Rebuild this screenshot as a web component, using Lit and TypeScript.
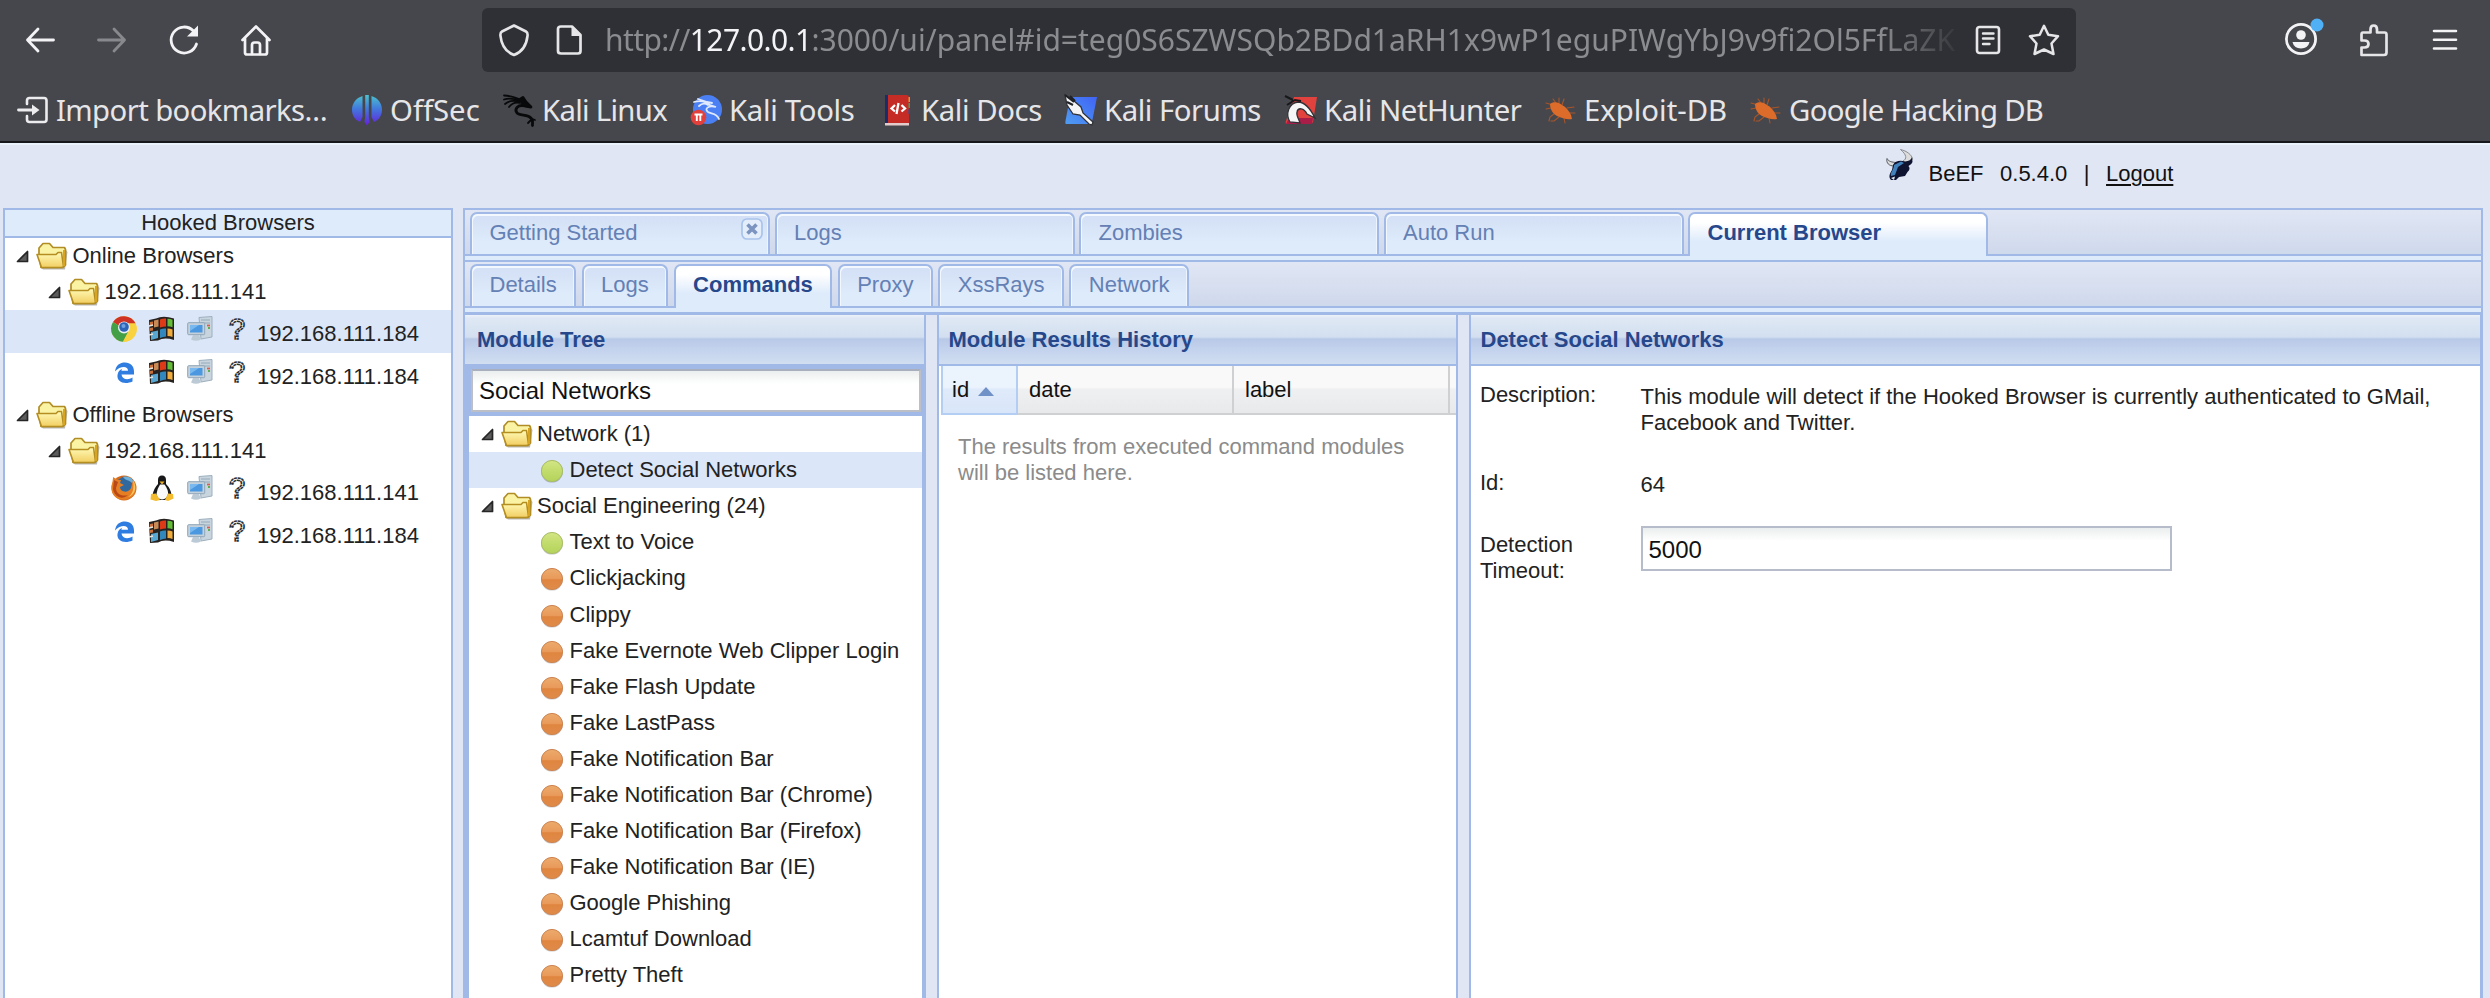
import { LitElement, html, css, svg } from "lit";
import { customElement, property } from "lit/decorators.js";
import { classMap } from "lit/directives/class-map.js";
import { styleMap } from "lit/directives/style-map.js";

const bug = svg`
  <g fill="none" stroke="#a8552a" stroke-width="1.1" stroke-linecap="round">
    <path d="M8 11L1 9M6 14L1 15M9 20L5 23L4 27M14 23L9 27L6 27M19 24L20 29M24 19L30 19M22 14L29 13M17 11L19 5M11 9L8 5M14 9L14 4"/>
  </g>
  <path d="M5 10C8 7 14 8 17 11C21 13 24 17 26 21L27 25C22 26 17 24 12 22C8 20 5 15 5 10Z" fill="#dd6b2a"/>`;

const ICONS: Record<string, [string, unknown]> = {
  back: ["0 0 32 32", svg`<g fill="none" stroke="#f3f3f5" stroke-width="2.8" stroke-linecap="round" stroke-linejoin="round"><path d="M3.500 16H29.500M14 5L3.500 16L14 27"/></g>`],
  forward: ["0 0 32 32", svg`<g fill="none" stroke="#88898d" stroke-width="2.800" stroke-linecap="round" stroke-linejoin="round"><path d="M2.500 16H28.500M18 5L28.500 16L18 27"/></g>`],
  reload: ["0 0 32 32", svg`<path d="M28.500 20A13 13 0 1 1 25.500 7" fill="none" stroke="#f3f3f5" stroke-width="2.800" stroke-linecap="round"/><path d="M30 1.500V12.500H19Z" fill="#f3f3f5"/>`],
  home: ["0 0 32 32", svg`<g fill="none" stroke="#f3f3f5" stroke-width="2.700" stroke-linejoin="round" stroke-linecap="round"><path d="M2.500 16L16 2.500L29.500 16M5 14V28.500Q5 30.500 7 30.500H25Q27 30.500 27 28.500V14"/><path d="M12 30V21Q12 18.500 14.500 18.500H17.500Q20 18.500 20 21V30"/></g>`],
  shield: ["0 0 32 32", svg`<path d="M16 1.500L28 7.500Q30 8.500 29.500 12C28.500 21 24 28 16 31C8 28 3.500 21 2.500 12Q2 8.500 4 7.500Z" fill="none" stroke="#e6e6e8" stroke-width="2.600" stroke-linejoin="round"/>`],
  page: ["0 0 32 32", svg`<path d="M8 2.500H19L27.500 11V27Q27.500 29.500 25 29.500H8Q5 29.500 5 27V5Q5 2.500 8 2.500Z" fill="none" stroke="#e6e6e8" stroke-width="2.700" stroke-linejoin="round"/><path d="M18.500 3V12H27.500Z" fill="#e6e6e8"/>`],
  reader: ["0 0 32 32", svg`<rect x="5" y="3" width="22" height="26" rx="2.500" fill="none" stroke="#e6e6e8" stroke-width="2.600"/><path d="M11 9.500H21.500M11 14.500H21.500M11 20H17.500" stroke="#e6e6e8" stroke-width="2.400" stroke-linecap="round"/>`],
  star: ["0 0 32 32", svg`<path d="M16 1.800L20.300 10.800L30 12.200L23.500 19.500L25.500 30L16 25.500L6.500 30L8.500 19.500L2 12.200L11.700 10.800Z" fill="none" stroke="#e6e6e8" stroke-width="2.500" stroke-linejoin="round"/>`],
  account: ["0 0 36 36", svg`<circle cx="17" cy="19" r="14.600" fill="none" stroke="#f3f3f5" stroke-width="2.800"/><circle cx="17" cy="15" r="4.800" fill="#f3f3f5"/><path d="M8.500 22H25.500Q24 28.500 17 28.500Q10 28.500 8.500 22Z" fill="#f3f3f5"/><circle cx="33" cy="5" r="6.500" fill="#4fb0f5"/>`],
  puzzle: ["0 0 32 32", svg`<path d="M5 8.500H12.500V5.500Q12.500 1.500 15.700 1.500Q19 1.500 19 5.500V8.500H26.500Q28.500 8.500 28.500 10.500V28.500Q28.500 31 26 31H3.500V23.500H6.500Q10.500 23.500 10.500 20Q10.500 16.500 6.500 16.500H3.500V10.500Q3.500 8.500 5 8.500Z" fill="none" stroke="#e6e6e8" stroke-width="2.700" stroke-linejoin="round"/>`],
  menu: ["0 0 32 32", svg`<path d="M5 7H27M5 15.800H27M5 24.500H27" stroke="#f3f3f5" stroke-width="2.600" stroke-linecap="round"/>`],
  importer: ["0 0 32 32", svg`<path d="M10 10V6.500Q10 4 12.500 4H27Q29.500 4 29.500 6.500V25.500Q29.500 28 27 28H12.500Q10 28 10 25.500V22" fill="none" stroke="#ececee" stroke-width="2.600" stroke-linecap="round"/><path d="M1.500 16H18" stroke="#ececee" stroke-width="2.800" stroke-linecap="round"/><path d="M15 10.500L22.500 16L15 21.500Z" fill="#ececee"/>`],
  offsec: ["0 0 32 32", svg`<defs><linearGradient id="os" x1="0" y1="0" x2="0" y2="1"><stop offset="0" stop-color="#4cc3cf"/><stop offset=".45" stop-color="#4179dc"/><stop offset="1" stop-color="#6420dd"/></linearGradient></defs><path d="M11.500 2C5 4 1 9.500 1 16C1 21 4 26 9 28L11.500 23ZM20.500 2C27 4 31 9.500 31 16C31 21 28 26 23 28L20.500 23ZM14.200 1H17.800V23L18.500 28L16 31.500L13.500 28L14.200 23Z" fill="url(#os)"/>`],
  kali: ["0 0 32 32", svg`<g fill="none" stroke="#08090a" stroke-linecap="round" stroke-linejoin="round"><path d="M1 1.500C8 2 13 3 17 6M1 5.500C7 3.500 12 5 17 7M2 10C7 6 11 6 16 8M6 13C9 9 13 8 17 9" stroke-width="1.800"/><path d="M16 6L20 3.500L23 8L28 13L22 12C15 10 11 15 14 19C17 22 25 20 28 24C31 27 29 29 29.500 31.500" stroke-width="2.800"/><path d="M27 24L32 26M28 26L25 29" stroke-width="1.800"/></g><path d="M15 5L21 4L27 13L19 11Z" fill="#08090a"/>`],
  tools: ["0 0 32 32", svg`<circle cx="17.500" cy="15.500" r="14.500" fill="#4b80f4"/><g fill="none" stroke="#dfe9ff" stroke-width="1.800" stroke-linecap="round"><path d="M4 8C10 6 15 7 20 11L26 13C18 11 14 15 18 18C21 20 27 19 29 25M9 12C12 9 15 9 18 11M8 5L17 8L22 9"/></g><circle cx="8.500" cy="23.500" r="7.800" fill="#e2403c"/><path d="M4.500 20.500H12.500M6.800 21V27M10.300 21V27" stroke="#fff" stroke-width="1.900" fill="none"/>`],
  docs: ["0 0 32 32", svg`<path d="M3 1H6V29H3Z" fill="#1d2c68"/><path d="M6 1H24Q27 1 27 4V29H6Z" fill="#c62c26"/><path d="M26.500 3h1.500v5h-1.500z" fill="#e09434"/><path d="M26.500 9h1.500v5h-1.500z" fill="#4c9a55"/><path d="M26.500 15h1.500v5h-1.500z" fill="#334d9b"/><path d="M3 29H27V31.500H3Z" fill="#e4cccc"/><path d="M13 11L9.500 14.500L13 17.500M16.500 9L14.500 20M19.500 11L23 14.500L19.500 17.500" fill="none" stroke="#fff" stroke-width="2.300"/>`],
  forums: ["0 0 32 32", svg`<defs><linearGradient id="fo" x1="1" y1="0" x2="0" y2="1"><stop offset="0" stop-color="#4063f5"/><stop offset="1" stop-color="#4f9df1"/></linearGradient></defs><path d="M5 3H32L27 28Q26.500 30 24 30H1Q0 30 .5 27Z" fill="url(#fo)"/><path d="M0 1L9 7L16 13L18 19L28 28L27 31L24 30L15 21L8 20L2 11Z" fill="#f5f5f5" stroke="#303237" stroke-width="1.300"/><path d="M0 1L9 8M2 8L8 11M5 2L10 7" stroke="#202124" stroke-width="2"/>`],
  nethunter: ["0 0 32 32", svg`<path d="M9 3H32L28 28Q27.500 30 25 30H2Q0 30 1 27Z" fill="#e2423e"/><path d="M4 24H28L27 30H1Z" fill="#a91e49"/><path d="M5 28C0 20 4 9 13 8C20 8 25 14 30 24L22 20C19 14 13 13 12 18C11 22 14 25 15 29Z" fill="#f6f6f6" stroke="#303237" stroke-width="1.300"/><path d="M0 2L8 6M2 11L10 6L16 7" stroke="#17181b" stroke-width="2" fill="none"/>`],
  bug: ["0 0 32 32", bug],
  beef: ["0 0 28 32", svg`<path d="M17 12C21 10 21 6 14.500 .5C21 2 26 6 26.500 10Q25 14 20 14Z" fill="#dcdcdc" stroke="#77797d" stroke-width=".8"/><path d="M8 17C3 17 0 14 1 9.500C3 13 6 13 10 13.500Z" fill="#dcdcdc" stroke="#55585d" stroke-width="1"/><path d="M7 16C9 12 14 11 19 12.500Q25 12 26 8L26.500 13Q26 15 22.500 17Q25 20 21.500 23L19 27L13 28L10 31L5 31C2 28 4 24 6 21Z" fill="#0d1330"/><path d="M8 16L15 12.500L18 14L12 18L9 26L5 27C4 23 8 21 8 16Z" fill="#4381bb"/><path d="M5 29l4-1.500-1 3.500z" fill="#dfe5ea"/>`],
  folder: ["0 0 32 28", svg`<path d="M4 25L7 27.500H29L31.500 10L30 8Z" fill="#000" opacity=".28"/><path d="M3 12V6L7 1.500H13.500L17 5.500H28.500L29.500 7.500V23L27 25.500H5Z" fill="#fbf3a4" stroke="#b18d26" stroke-width="1.700" stroke-linejoin="round"/><path d="M1 12.500H20L22 10.500H25.500L27.500 24.500L26 25.500H5.500Z" fill="url(#fd)" stroke="#b58e22" stroke-width="1.600" stroke-linejoin="round"/><path d="M28 8V24" stroke="#d9a520" stroke-width="2"/><defs><linearGradient id="fd" x1="0" y1="0" x2="0" y2="1"><stop offset="0" stop-color="#fffbb8"/><stop offset="1" stop-color="#f2ce62"/></linearGradient></defs>`],
  arrow: ["0 0 13 13", svg`<path d="M11.500 1.500V11.500H1.500Z" fill="#5c5c5c" stroke="#262626" stroke-width="1.700" stroke-linejoin="round"/>`],
  chrome: ["0 0 26 26", svg`<circle cx="13" cy="13" r="12.800" fill="#fbd13c"/><path d="M13 13L2 6A13 13 0 0 1 24.500 7.500H13Z" fill="#cf3326"/><path d="M13 13L2 6A13 13 0 0 0 12 25.800L17 16Z" fill="#44a047"/><path d="M13 7.500H24.500A13 13 0 0 1 12 25.800L17.500 16Z" fill="#f9d23f"/><circle cx="13" cy="11.500" r="6" fill="#e9eef5"/><circle cx="13" cy="11" r="4.800" fill="#2e64b8"/><circle cx="12.500" cy="10" r="2" fill="#6ea0e0"/>`],
  edge: ["0 0 26 26", svg`<path d="M4 12.500C5 6 9 3.500 14 3.500C19.500 3.500 23 7 23 12.500V15.500H10.500C11 20.500 17 21.500 21.500 18.500V22.500C13.500 26 5.500 23 6.500 16C7 12.500 8.500 11 11.500 9.500C10.700 10 10.500 11 10.500 11.800H17C17 6.500 9 7 4 12.500Z" fill="#2f7de0"/>`],
  windows: ["0 0 26 26", svg`<path d="M0 4L7 2.500Q14-1 25 2.500V24Q15 21 9 24.500L1 25Z" fill="#26221f"/><path d="M1 6l3-.500v3.500l-3 .5zM1 12l3-.500v3l-3 .5z" fill="#c8703a"/><path d="M5 4.500l4.500-1v7L5 11.500z" fill="#c98a55"/><path d="M2 16l7-1.500v7.500l-7 2z" fill="#59a7d3"/><path d="M11 3.500q3-1.500 6-1v8q-3 0-6 1z" fill="#dd3a18"/><path d="M18.500 2.800q3 0 5 1v7.500q-2-1-5-1z" fill="#63bd37"/><path d="M11 13.500q3-1.500 6-1v8q-3 0-6 1.500z" fill="#3288bd"/><path d="M18.500 12.500q3 0 5 1v7.500q-2-1-5-1z" fill="#f0ad3d"/><path d="M0 10l4-1M0 19l4-1" stroke="#e9e6e0" stroke-width="1.500"/>`],
  computer: ["0 0 26 26", svg`<path d="M12 1.500L25 .5V21L14 23Z" fill="#c9d5de" stroke="#9db0bf"/><path d="M14 4H23M14 7H23" stroke="#94a9ba"/><path d="M20 9.500h3" stroke="#df5b4c" stroke-width="1.800"/><path d="M21 12h2" stroke="#5fae54" stroke-width="1.800"/><rect x=".7" y="6.700" width="17" height="12" rx="1" fill="#c4d0da" stroke="#8fa5b8"/><path d="M3 9H15.500V16.500H3Z" fill="#4b98e0"/><path d="M3 9H12L3 15Z" fill="#7ab9ef"/><path d="M6 19h6l2 4.500q-5 2.500-10 0z" fill="#bccad5"/>`],
  unknown: ["0 0 26 26", svg`<text x="12" y="23" text-anchor="middle" font-family="Liberation Sans" font-size="29" fill="#fff" stroke="#2c2f33" stroke-width="1.600" stroke-dasharray="3 .6">?</text>`],
  firefox: ["0 0 26 26", svg`<circle cx="13" cy="13" r="12.500" fill="#d3681c"/><circle cx="14.500" cy="10.500" r="9" fill="#31699f"/><path d="M12 2C18 0 24 5 23 10L20 7C18 5 15 6 12 2Z" fill="#6fb0d8"/><path d="M2 2L7 5L10 5L9 8L13 10L9 12C9 17 17 19 20 13L22 5C27 12 25 20 19 23C10 28 1 22 .5 14C.3 9 2 7 2 2Z" fill="#e67f24"/><path d="M3 5L7 7L5 13C5 19 11 22 17 20C11 26 3 21 2 14Z" fill="#b94a17"/><path d="M22 5C27 13 23 21 17 22C23 18 23 12 22 5Z" fill="#f8c45c"/>`],
  linux: ["0 0 26 26", svg`<path d="M9 5Q9 .5 13 .5Q17 .5 17 5V9Q22 14 22.500 20L18 25H8L3.500 20Q5 13 9 9Z" fill="#18181a"/><path d="M11 9.500H15.500Q19.500 15 19 19Q18 24 13 24.500Q8 24 7.500 19Q8 14 11 9.500Z" fill="#fafafa"/><path d="M10.500 6.500h5l-2.500 3z" fill="#eeb123"/><path d="M2 19L7 18.500L11 25L7 26L1.500 24.500ZM24 19L19 18.500L16 25L19 26L24.500 23.500Z" fill="#f4bb2f"/>`],
  green: ["0 0 24 24", svg`<defs><linearGradient id="gr" x1="0" y1="0" x2="0" y2="1"><stop offset="0" stop-color="#d3e584"/><stop offset=".5" stop-color="#c2dc6c"/><stop offset="1" stop-color="#b4d35a"/></linearGradient></defs><circle cx="12" cy="12.600" r="11" fill="#000" opacity=".22"/><circle cx="12" cy="12" r="10.600" fill="url(#gr)" stroke="#a9bf64" stroke-width="1"/>`],
  orange: ["0 0 24 24", svg`<defs><linearGradient id="or" x1="0" y1="0" x2="0" y2="1"><stop offset="0" stop-color="#ecab6c"/><stop offset=".5" stop-color="#e8995a"/><stop offset=".53" stop-color="#df8540"/><stop offset="1" stop-color="#e08b49"/></linearGradient></defs><circle cx="12" cy="12.600" r="11" fill="#000" opacity=".2"/><circle cx="12" cy="12" r="10.600" fill="url(#or)" stroke="#cf8450" stroke-width="1"/>`],
  close: ["0 0 22 22", svg`<rect x="1" y="1" width="20" height="20" rx="5" fill="#e4eefb" stroke="#a9c3ec" stroke-width="1.700"/><path d="M6.500 6.500L15.500 15.500M15.500 6.500L6.500 15.500" stroke="#7b94c0" stroke-width="3.600"/>`],
};

@customElement("ui-icon")
export class UiIcon extends LitElement {
  @property() name = "";
  static styles = css`
    :host { display: block; flex: none; }
    .glyph { display: block; width: 100%; height: 100%; overflow: visible; }
  `;
  render() {
    const [box, art] = ICONS[this.name] ?? ["0 0 1 1", null];
    return html`<svg class="glyph" viewBox=${box}>${art}</svg>`;
  }
}

@customElement("browser-chrome")
export class BrowserChrome extends LitElement {
  static styles = css`
    :host { display: block; height: 141px; background: #46474c; font-family: "Noto Sans", sans-serif; color: #e6e6e8; border-bottom: 2px solid #16181b; }
    .top { display: grid; grid-template-columns: 482px 1594px 1fr; height: 79px; align-items: center; }
    .nav { display: flex; gap: 40px; padding-left: 24px; }
    .nav ui-icon, .url ui-icon { width: 32px; height: 32px; }
    .url { display: flex; align-items: center; height: 64px; background: #2f3035; border-radius: 6px; padding: 0 16px; box-sizing: border-box; }
    .url .page { margin-left: 23px; }
    .address { flex: 1; margin: 0 16px 0 20px; font-size: 30px; line-height: 64px; overflow: hidden; white-space: nowrap; color: #8b8c90; -webkit-mask-image: linear-gradient(90deg, #000 1275px, transparent 1358px); mask-image: linear-gradient(90deg, #000 1275px, transparent 1358px); }
    .scheme, .host { letter-spacing: -0.6px; }
    .host { color: #f4f4f6; }
    .url .star { margin-left: 24px; }
    .actions { display: flex; justify-content: flex-end; align-items: center; padding-right: 29px; }
    .actions ui-icon { width: 32px; height: 32px; }
    .actions .account { width: 36px; height: 36px; margin: -4px 38px 0 0; }
    .actions .puzzle { margin-right: 39px; }
    .marks { display: grid; grid-template-columns: 334px 152px 187px 192px 183px 220px 260px 205px auto; padding-left: 17px; height: 62px; align-items: center; justify-content: start; }
    .mark { display: flex; align-items: center; gap: 7px; font-size: 29.3px; line-height: 62px; white-space: nowrap; }
    .mark ui-icon { width: 32px; height: 32px; }
  `;
  private marks: [string, string, number][] = [
    ["importer", "Import bookmarks…", -0.6], ["offsec", "OffSec", 0], ["kali", "Kali Linux", -0.7],
    ["tools", "Kali Tools", -0.3], ["docs", "Kali Docs", -0.4], ["forums", "Kali Forums", -0.45],
    ["nethunter", "Kali NetHunter", -0.45], ["bug", "Exploit-DB", 0], ["bug", "Google Hacking DB", -0.7],
  ];
  render() {
    return html`
      <div class="top">
        <div class="nav">${["back", "forward", "reload", "home"].map((n) => html`<ui-icon name=${n}></ui-icon>`)}</div>
        <div class="url">
          <ui-icon name="shield"></ui-icon><ui-icon class="page" name="page"></ui-icon>
          <div class="address"><span class="scheme">http://</span><span class="host">127.0.0.1</span>:3000/ui/panel#id=teg0S6SZWSQb2BDd1aRH1x9wP1eguPIWgYbJ9v9fi2Ol5FfLaZK</div>
          <ui-icon name="reader"></ui-icon><ui-icon class="star" name="star"></ui-icon>
        </div>
        <div class="actions">
          <ui-icon class="account" name="account"></ui-icon><ui-icon class="puzzle" name="puzzle"></ui-icon><ui-icon name="menu"></ui-icon>
        </div>
      </div>
      <div class="marks">${this.marks.map(([i, t, track]) => html`<div class="mark"><ui-icon name=${i}></ui-icon><span style=${styleMap({ letterSpacing: `${track}px` })}>${t}</span></div>`)}</div>
    `;
  }
}

@customElement("hooked-tree")
export class HookedTree extends LitElement {
  static styles = css`
    :host { display: block; box-sizing: border-box; border: 2px solid #a0b9e6; border-bottom: 0; background: #fff; }
    .title { height: 26px; line-height: 26px; text-align: center; background: #deebfb; border-bottom: 2px solid #a0b9e6; }
    .row { display: flex; align-items: center; height: 36px; box-sizing: border-box; padding-left: 11px; }
    .row.child { padding-left: 43px; }
    .arrow { width: 13px; height: 13px; margin-top: 1px; }
    .folder { width: 32px; height: 28px; margin: 0 4.500px 0 7px; }
    .leaf { display: flex; align-items: flex-start; gap: 12px; height: 43.400px; padding: 6px 0 0 106px; box-sizing: border-box; }
    .leaf.selected { background: #dbe6f8; }
    .leaf ui-icon { width: 26px; height: 26px; }
    .leaf span { line-height: 26px; margin: 5px 0 0 -6px; }
  `;
  private groups = [
    { name: "Online Browsers", items: [["chrome", "windows", "192.168.111.184"], ["edge", "windows", "192.168.111.184"]] },
    { name: "Offline Browsers", items: [["firefox", "linux", "192.168.111.141"], ["edge", "windows", "192.168.111.184"]] },
  ];
  private folder(label: string, child: boolean) {
    return html`<div class=${classMap({ row: true, child })}><ui-icon class="arrow" name="arrow"></ui-icon><ui-icon class="folder" name="folder"></ui-icon><span>${label}</span></div>`;
  }
  render() {
    return html`<div class="title">Hooked Browsers</div>
      ${this.groups.map((g, gi) => html`
        ${this.folder(g.name, false)}${this.folder("192.168.111.141", true)}
        ${g.items.map(([b, os, ip], i) => html`<div class=${classMap({ leaf: true, selected: gi === 0 && i === 0 })}>
          <ui-icon name=${b}></ui-icon><ui-icon name=${os}></ui-icon><ui-icon name="computer"></ui-icon><ui-icon name="unknown"></ui-icon><span>${ip}</span></div>`)}`)}`;
  }
}

@customElement("tab-strip")
export class TabStrip extends LitElement {
  @property({ type: Array }) tabs: string[] = [];
  @property({ type: Number }) active = 0;
  @property({ type: Boolean, reflect: true }) wide = false;
  static styles = css`
    :host { display: block; background: #deebfb; height: 50px; border-bottom: 2px solid #a0b9e6; }
    .strip { display: flex; gap: 5.300px; height: 44px; padding: 2px 0 0 5px; box-sizing: border-box; background: linear-gradient(#e0e6f4, #cfd9ec); box-shadow: 0 2px 0 #a0b9e6; }
    .tab { display: flex; justify-content: space-between; box-sizing: border-box; height: 42px; padding: 0 17.500px; border: 2px solid #a0b9e6; border-bottom: 0; border-radius: 7px 7px 0 0; background: linear-gradient(#d2dff5, #deebfb 70%); box-shadow: inset 1px 2px 0 #f3f8fe, inset -1px 0 0 #eef4fd; color: #6480b4; line-height: 37px; white-space: nowrap; }
    :host([wide]) .tab { width: 300px; }
    :host([wide]) .strip { gap: 4.500px; }
    .tab.on { height: 44px; color: #27478b; font-weight: bold; background: linear-gradient(#fff 20%, #deebfb 65%); box-shadow: none; }
    .close { width: 22px; height: 22px; margin: 4px -12px 0 0; }
  `;
  render() {
    return html`<div class="strip">${this.tabs.map((t, i) => html`<div class=${classMap({ tab: true, on: i === this.active })}><span>${t}</span>${this.wide && i === 0 ? html`<ui-icon class="close" name="close"></ui-icon>` : null}</div>`)}</div>`;
  }
}

@customElement("app-root")
export class AppRoot extends LitElement {
  static styles = css`
    :host { display: flex; flex-direction: column; width: 2490px; height: 998px; overflow: hidden; background: #e0e6f4; font-family: "Liberation Sans", Arial, sans-serif; font-size: 22px; color: #222; }
    .brand { display: flex; height: 65px; flex: none; box-sizing: border-box; padding-left: 1886px; border-top: 2px solid #eaf2fc; color: #111; line-height: 26px; }
    .brand ui-icon { width: 28px; height: 32px; margin: 4px 14.500px 0 0; }
    .brand span { margin-top: 16px; margin-right: 16.500px; }
    .brand .logout { text-decoration: underline; text-underline-offset: 3px; text-decoration-thickness: 2px; }
    .body { display: grid; grid-template-columns: 450px 2020px; column-gap: 10px; padding-left: 3px; flex: 1; min-height: 0; }
    .main { display: flex; flex-direction: column; box-sizing: border-box; border: 2px solid #a0b9e6; border-bottom: 0; min-height: 0; }
    .panels { flex: 1; display: grid; grid-template-columns: 461px 521px 1012px; column-gap: 11px; border-top: 1px solid #a0b9e6; min-height: 0; }
    .panel { box-sizing: border-box; background: #fff; border-right: 2px solid #a0b9e6; display: flex; flex-direction: column; min-height: 0; overflow: hidden; }
    .panel + .panel { border-left: 2px solid #a0b9e6; }
    .panel.form { border-right-width: 1px; }
    .head { flex: none; height: 51px; box-sizing: border-box; border-bottom: 2px solid #a0b9e6; padding-left: 9.500px; line-height: 50px; font-weight: bold; color: #27478b; background: linear-gradient(#eef3fa 0, #dfe8f4 3px, #d3dff0 22px, #b8c9e7 24px, #c3d2ed 34px, #d1def1 49px); }
    .panel:first-child .head { padding-left: 12px; }
    .tree { flex: 1; border: solid #a0b9e6; border-width: 3px 2px 0 4px; }
    .search { border: 0 solid #a0b9e6; border-width: 0 0 4px 2px; background: #a0b9e6; padding-right: 1px; }
    .field { box-sizing: border-box; height: 43px; border: 2px solid #bcbfc6; border-top-color: #a9afbd; background: linear-gradient(#ebeeee, #fff 13px); font-size: 24px; line-height: 40px; padding-left: 6px; color: #111; }
    .row { display: flex; align-items: center; height: 36.100px; padding-left: 12px; white-space: nowrap; }
    .row .arrow { width: 13px; height: 13px; margin: 1px 7px 0 0; }
    .row .folder { width: 32px; height: 28px; margin-right: 4px; }
    .row.leaf { padding-left: 71px; }
    .row.leaf.selected { background: #dbe6f8; }
    .row .dot { width: 24px; height: 24px; margin: 2px 5.500px 0 0; }
    .columns { display: grid; grid-template-columns: 77px 216px 216px 1fr; height: 48px; flex: none; box-sizing: border-box; padding-left: 2px; color: #111; line-height: 47px; }
    .col { box-sizing: border-box; padding-left: 11px; border-right: 2px solid #cfd0d2; border-bottom: 2px solid #cfd0d2; background: linear-gradient(#f9f9f9 45%, #eff0f1 50%, #e8e9ea); }
    .col.sorted { display: flex; align-items: center; gap: 9px; padding-left: 9px; border: 2px solid #b4cdf3; border-top: 0; background: linear-gradient(#ebf3fd 45%, #dfeafa 50%, #d9e6f9); }
    .sort { border: 8px solid transparent; border-top: 0; border-bottom: 9px solid #7090c8; margin-top: 4px; }
    .col:last-child { border-right: 0; }
    .note { color: #8b8b8b; line-height: 26px; padding: 20px 40px 0 19px; }
    .fields { display: grid; grid-template-columns: 160.500px 1fr; padding: 0 40px 0 9px; line-height: 26px; grid-template-rows: 88px 72px 52px; }
    .label { padding-top: 16px; }
    .value { padding-top: 18px; }
    .label.multi { padding-top: 6px; width: 120px; }
    .field.wide { width: 531px; height: 45px; line-height: 43px; border-color: #b7bccb; }
  `;
  private modules = [
    "Clickjacking", "Clippy", "Fake Evernote Web Clipper Login", "Fake Flash Update", "Fake LastPass",
    "Fake Notification Bar", "Fake Notification Bar (Chrome)", "Fake Notification Bar (Firefox)",
    "Fake Notification Bar (IE)", "Google Phishing", "Lcamtuf Download", "Pretty Theft",
  ];
  private folder(label: string) {
    return html`<div class="row"><ui-icon class="arrow" name="arrow"></ui-icon><ui-icon class="folder" name="folder"></ui-icon><span>${label}</span></div>`;
  }
  private leaf(label: string, dot: string, selected = false) {
    return html`<div class=${classMap({ row: true, leaf: true, selected })}><ui-icon class="dot" name=${dot}></ui-icon><span>${label}</span></div>`;
  }
  render() {
    return html`
      <browser-chrome></browser-chrome>
      <div class="brand"><ui-icon name="beef"></ui-icon><span>BeEF</span><span>0.5.4.0</span><span>|</span><span class="logout">Logout</span></div>
      <div class="body">
        <hooked-tree></hooked-tree>
        <div class="main">
          <tab-strip wide .tabs=${["Getting Started", "Logs", "Zombies", "Auto Run", "Current Browser"]} .active=${4}></tab-strip>
          <tab-strip .tabs=${["Details", "Logs", "Commands", "Proxy", "XssRays", "Network"]} .active=${2}></tab-strip>
          <div class="panels">
            <div class="panel">
              <div class="head">Module Tree</div>
              <div class="tree">
                <div class="search"><div class="field">Social Networks</div></div>
                ${this.folder("Network (1)")}
                ${this.leaf("Detect Social Networks", "green", true)}
                ${this.folder("Social Engineering (24)")}
                ${this.leaf("Text to Voice", "green")}
                ${this.modules.map((m) => this.leaf(m, "orange"))}
              </div>
            </div>
            <div class="panel">
              <div class="head">Module Results History</div>
              <div class="columns">
                <div class="col sorted"><span>id</span><span class="sort"></span></div>
                <div class="col">date</div><div class="col">label</div><div class="col"></div>
              </div>
              <div class="note">The results from executed command modules will be listed here.</div>
            </div>
            <div class="panel form">
              <div class="head">Detect Social Networks</div>
              <div class="fields">
                <div class="label">Description:</div>
                <div class="value">This module will detect if the Hooked Browser is currently authenticated to GMail,<br>Facebook and Twitter.</div>
                <div class="label">Id:</div><div class="value">64</div>
                <div class="label multi">Detection Timeout:</div><div><div class="field wide">5000</div></div>
              </div>
            </div>
          </div>
        </div>
      </div>
    `;
  }
}
